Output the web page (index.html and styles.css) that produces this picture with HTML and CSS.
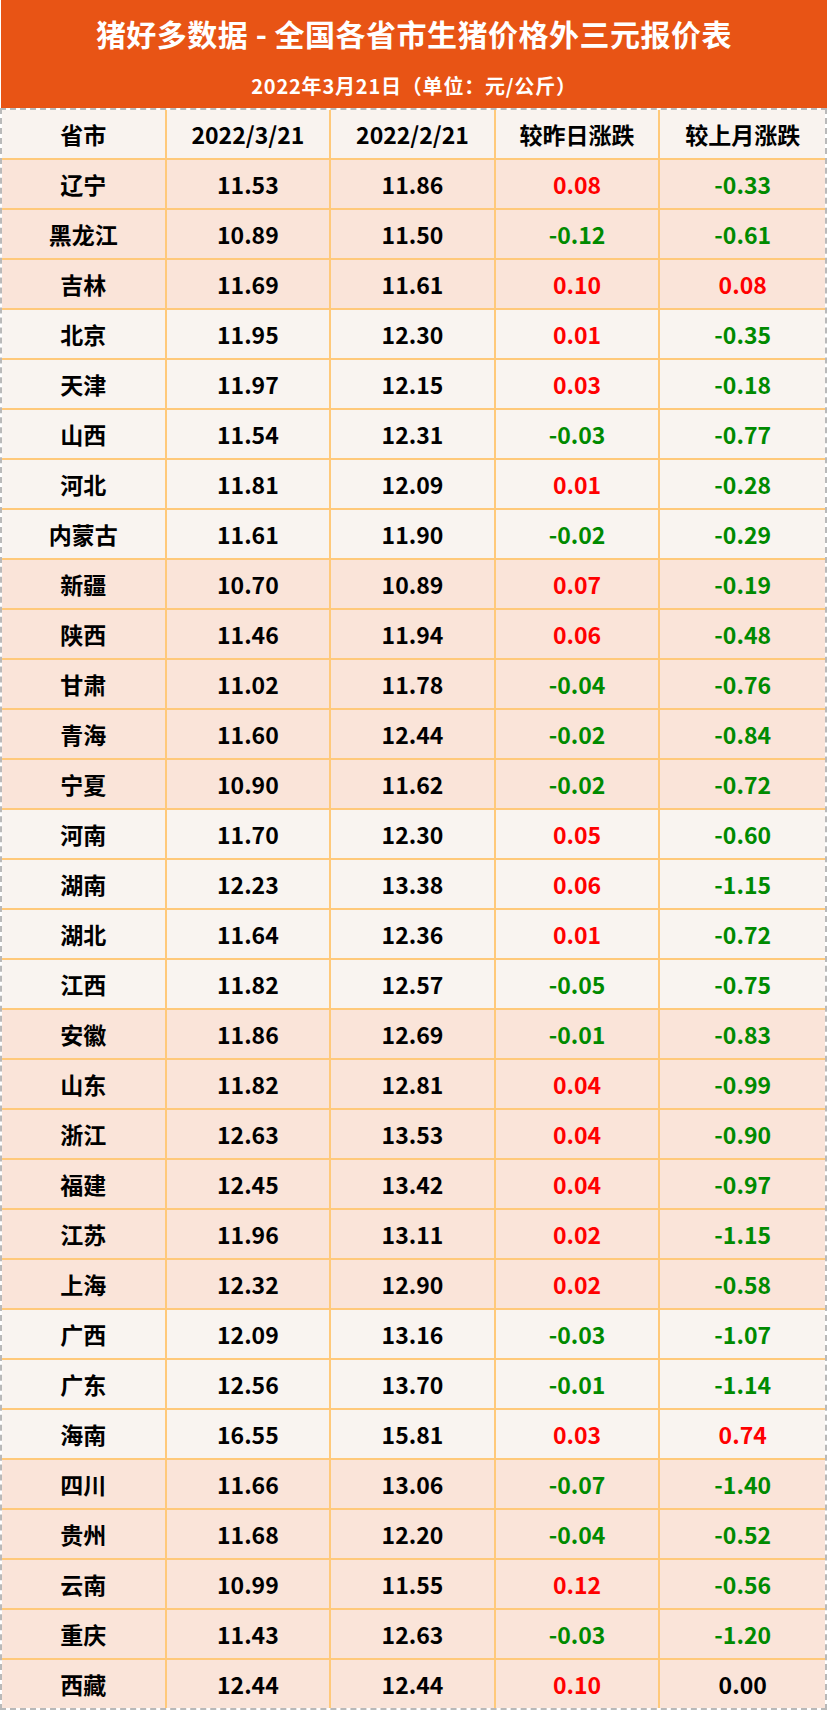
FILE: index.html
```html
<!DOCTYPE html>
<html lang="zh-CN">
<head>
<meta charset="utf-8">
<title>猪好多数据 - 全国各省市生猪价格外三元报价表</title>
<link rel="stylesheet" href="styles.css">
</head>
<body>
<div class="sheet">
  <header class="banner">
    <h1 class="title">猪好多数据 - 全国各省市生猪价格外三元报价表</h1>
    <p class="subtitle">2022年3月21日（单位：元/公斤）</p>
  </header>
  <div class="table">
    <div class="row head"><div>省市</div><div>2022/3/21</div><div>2022/2/21</div><div>较昨日涨跌</div><div>较上月涨跌</div></div>
    <div class="row pink"><div>辽宁</div><div>11.53</div><div>11.86</div><div class="up">0.08</div><div class="down">-0.33</div></div>
    <div class="row pink"><div>黑龙江</div><div>10.89</div><div>11.50</div><div class="down">-0.12</div><div class="down">-0.61</div></div>
    <div class="row pink"><div>吉林</div><div>11.69</div><div>11.61</div><div class="up">0.10</div><div class="up">0.08</div></div>
    <div class="row light"><div>北京</div><div>11.95</div><div>12.30</div><div class="up">0.01</div><div class="down">-0.35</div></div>
    <div class="row light"><div>天津</div><div>11.97</div><div>12.15</div><div class="up">0.03</div><div class="down">-0.18</div></div>
    <div class="row light"><div>山西</div><div>11.54</div><div>12.31</div><div class="down">-0.03</div><div class="down">-0.77</div></div>
    <div class="row light"><div>河北</div><div>11.81</div><div>12.09</div><div class="up">0.01</div><div class="down">-0.28</div></div>
    <div class="row light"><div>内蒙古</div><div>11.61</div><div>11.90</div><div class="down">-0.02</div><div class="down">-0.29</div></div>
    <div class="row pink"><div>新疆</div><div>10.70</div><div>10.89</div><div class="up">0.07</div><div class="down">-0.19</div></div>
    <div class="row pink"><div>陕西</div><div>11.46</div><div>11.94</div><div class="up">0.06</div><div class="down">-0.48</div></div>
    <div class="row pink"><div>甘肃</div><div>11.02</div><div>11.78</div><div class="down">-0.04</div><div class="down">-0.76</div></div>
    <div class="row pink"><div>青海</div><div>11.60</div><div>12.44</div><div class="down">-0.02</div><div class="down">-0.84</div></div>
    <div class="row pink"><div>宁夏</div><div>10.90</div><div>11.62</div><div class="down">-0.02</div><div class="down">-0.72</div></div>
    <div class="row light"><div>河南</div><div>11.70</div><div>12.30</div><div class="up">0.05</div><div class="down">-0.60</div></div>
    <div class="row light"><div>湖南</div><div>12.23</div><div>13.38</div><div class="up">0.06</div><div class="down">-1.15</div></div>
    <div class="row light"><div>湖北</div><div>11.64</div><div>12.36</div><div class="up">0.01</div><div class="down">-0.72</div></div>
    <div class="row light"><div>江西</div><div>11.82</div><div>12.57</div><div class="down">-0.05</div><div class="down">-0.75</div></div>
    <div class="row pink"><div>安徽</div><div>11.86</div><div>12.69</div><div class="down">-0.01</div><div class="down">-0.83</div></div>
    <div class="row pink"><div>山东</div><div>11.82</div><div>12.81</div><div class="up">0.04</div><div class="down">-0.99</div></div>
    <div class="row pink"><div>浙江</div><div>12.63</div><div>13.53</div><div class="up">0.04</div><div class="down">-0.90</div></div>
    <div class="row pink"><div>福建</div><div>12.45</div><div>13.42</div><div class="up">0.04</div><div class="down">-0.97</div></div>
    <div class="row pink"><div>江苏</div><div>11.96</div><div>13.11</div><div class="up">0.02</div><div class="down">-1.15</div></div>
    <div class="row pink"><div>上海</div><div>12.32</div><div>12.90</div><div class="up">0.02</div><div class="down">-0.58</div></div>
    <div class="row light"><div>广西</div><div>12.09</div><div>13.16</div><div class="down">-0.03</div><div class="down">-1.07</div></div>
    <div class="row light"><div>广东</div><div>12.56</div><div>13.70</div><div class="down">-0.01</div><div class="down">-1.14</div></div>
    <div class="row light"><div>海南</div><div>16.55</div><div>15.81</div><div class="up">0.03</div><div class="up">0.74</div></div>
    <div class="row pink"><div>四川</div><div>11.66</div><div>13.06</div><div class="down">-0.07</div><div class="down">-1.40</div></div>
    <div class="row pink"><div>贵州</div><div>11.68</div><div>12.20</div><div class="down">-0.04</div><div class="down">-0.52</div></div>
    <div class="row pink"><div>云南</div><div>10.99</div><div>11.55</div><div class="up">0.12</div><div class="down">-0.56</div></div>
    <div class="row pink"><div>重庆</div><div>11.43</div><div>12.63</div><div class="down">-0.03</div><div class="down">-1.20</div></div>
    <div class="row pink last"><div>西藏</div><div>12.44</div><div>12.44</div><div class="up">0.10</div><div>0.00</div></div>
  </div>
</div>
</body>
</html>
```

FILE: styles.css
```css
* { box-sizing: border-box; }
html, body { margin: 0; padding: 0; background: #ffffff; }
body {
  font-family: "Noto Sans CJK SC", "Noto Sans", sans-serif;
  font-weight: 700;
  color: #000;
}
.sheet { width: 827px; }
.banner {
  background: #E85415;
  color: #fff;
  height: 108px;
  display: flex;
  flex-direction: column;
  align-items: center;
  margin-left: 1px;
}
.title {
  margin: 0;
  font-size: 30px;
  line-height: 36px;
  padding-top: 15px;
  font-weight: 700;
  letter-spacing: 0.5px;
}
.subtitle {
  margin: 0;
  font-size: 20px;
  line-height: 24px;
  margin-top: 23px;
  letter-spacing: 0.8px;
}
.table {
  border: 2px dashed #b9b9b9;
  width: 827px;
}
.row {
  display: grid;
  grid-template-columns: repeat(5, 1fr);
  height: 50px;
  border-bottom: 2px solid #FFC97A;
}
.row.last { border-bottom: none; height: 48px; }
.row > div {
  display: flex;
  align-items: center;
  justify-content: center;
  font-size: 23px;
  border-right: 2px solid #FFC97A;
}
.row > div:last-child { border-right: none; }
.head { background: #F9F3EF; }
.pink { background: #FAE4D9; }
.light { background: #F9F4F0; }
.row > div.up { color: #FF0000; }
.row > div.down { color: #008A00; }
```
